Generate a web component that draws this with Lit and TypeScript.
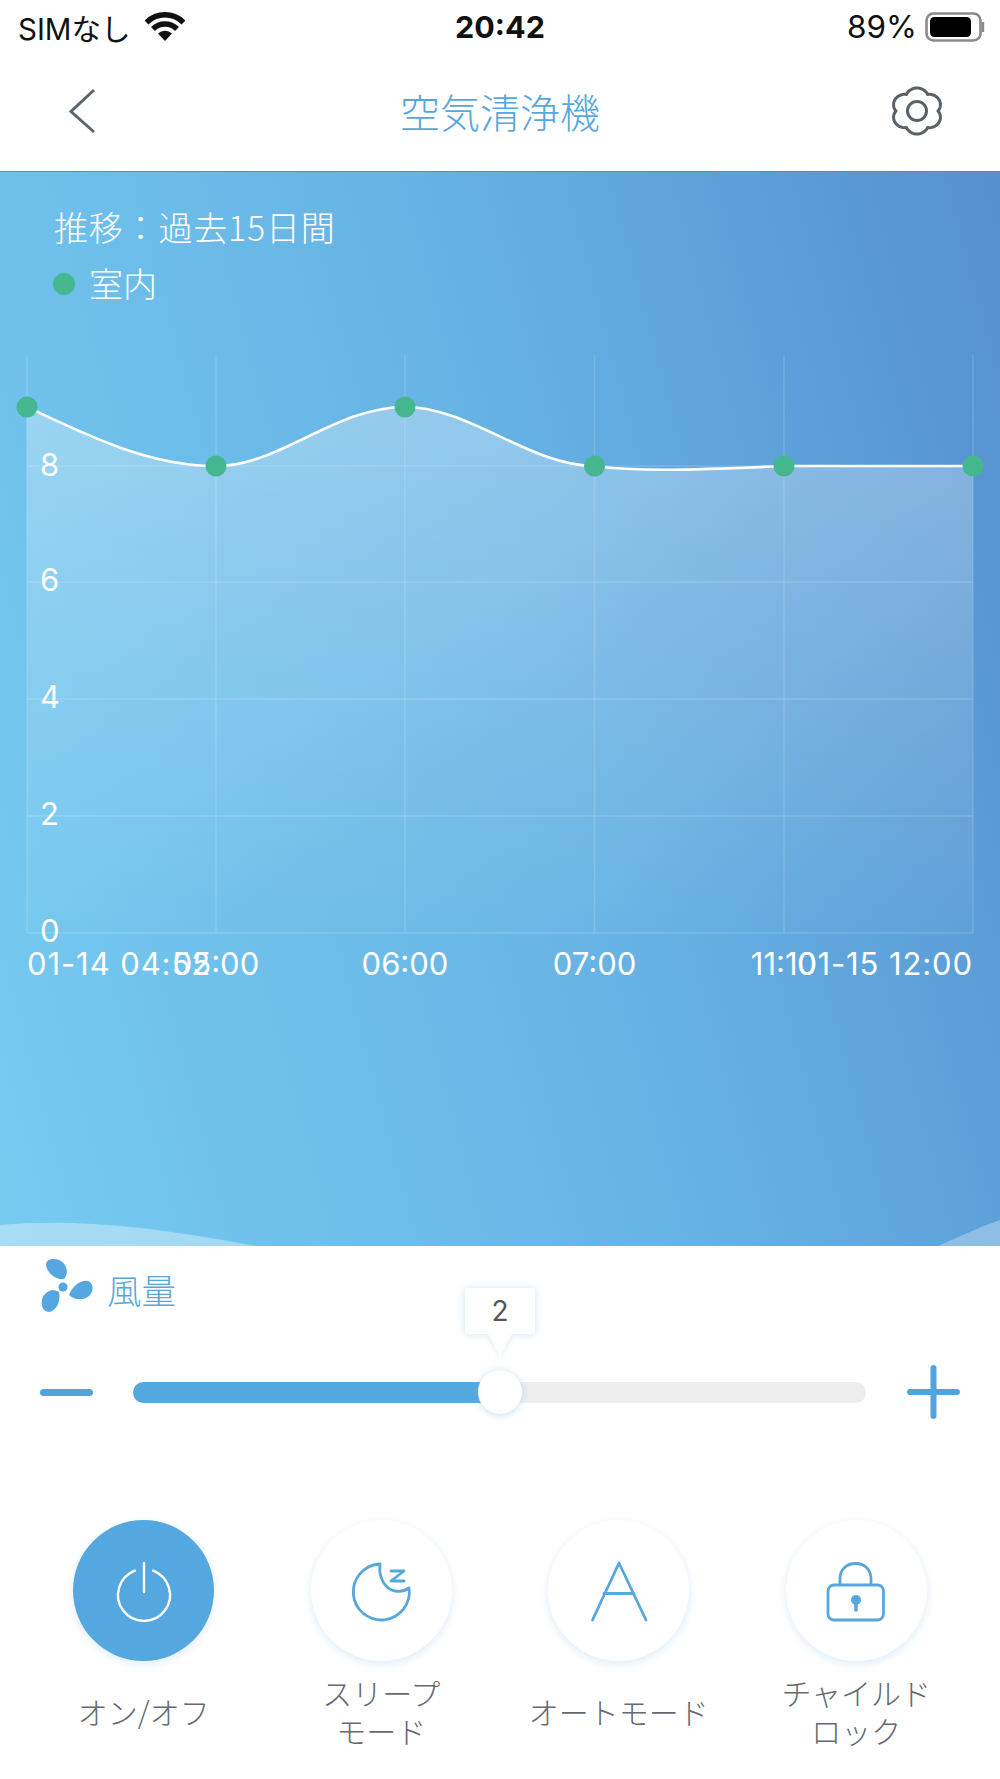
import { LitElement, html, css, svg } from "lit";
import { customElement } from "lit/decorators.js";

const gearPath = (() => {
  const pts: string[] = [];
  for (let a = 0; a < 360; a += 3) {
    const t = (a * Math.PI) / 180;
    const r = 19 + 4 * Math.pow(Math.abs(Math.cos(3 * t)), 0.8);
    pts.push(`${(25 + 1.1 * r * Math.sin(t)).toFixed(2)} ${(25 - r * Math.cos(t)).toFixed(2)}`);
  }
  return "M" + pts.join("L") + "Z";
})();

const PX = [27, 216, 405, 594.5, 784, 973];
const GY = [466, 582, 699, 816, 933];
const POINTS: [number, number][] = [
  [27, 407], [216, 466], [405, 407], [594.5, 466], [784, 466], [973, 466],
];
const CURVE =
  "M27 407C90 437 150 466 216 466C280 466 335 407 405 407C470 407 530 466 594.5 466C640 472 690 470 784 466L973 466";

const ACTIONS = [
  { label: ["オン/オフ"], on: true, icon: svg`<path d="M135 1568.6A26 26 0 1 0 153 1568.6M144 1561V1590" fill="none" stroke="#fff" stroke-width="2.4" stroke-linecap="round"/>`, vb: "114 1556 60 66" },
  { label: ["スリープ", "モード"], on: false, icon: svg`<path d="M381 1562A28 28 0 1 0 410 1586C403 1591 393 1590 388 1585C382 1579 380 1570 381 1562ZM392 1569H405L392 1579H405" fill="none" stroke="#57a7dd" stroke-width="2.8" stroke-linejoin="round" stroke-linecap="round"/>`, vb: "349 1556 66 66" },
  { label: ["オートモード"], on: false, icon: svg`<path d="M592.5 1618L619 1561L646 1618M604 1591.5H634" fill="none" stroke="#57a7dd" stroke-width="2.8" stroke-linejoin="round" stroke-linecap="round"/>`, vb: "586 1556 66 66" },
  { label: ["チャイルド", "ロック"], on: false, icon: svg`<rect x="829" y="1583" width="55.5" height="35" rx="6" fill="none" stroke="#57a7dd" stroke-width="2.8"/><path d="M841 1583V1577C841 1567 848 1561.5 856.5 1561.5C865 1561.5 872 1567 872 1577V1583" fill="none" stroke="#57a7dd" stroke-width="2.8"/><circle cx="857" cy="1598" r="5" fill="#57a7dd"/><path d="M857 1598V1608" stroke="#57a7dd" stroke-width="3.6" stroke-linecap="round"/>`, vb: "824 1556 66 66" },
];

@customElement("app-root")
export class AppRoot extends LitElement {
  static styles = css`
    :host {
      display: block;
      width: 1000px;
      height: 1779px;
      background: #fff;
      overflow: hidden;
      font-family: "Noto Sans CJK JP", "Noto Sans", sans-serif;
    }
    .status {
      height: 53px;
      display: grid;
      grid-template-columns: 1fr auto 1fr;
      align-items: center;
      color: #111;
      font-family: Inter, "Noto Sans CJK JP", sans-serif;
      font-size: 29.5px;
    }
    .status-left { display: flex; align-items: center; gap: 14px; padding-left: 18px; }
    .status-right { display: flex; align-items: center; justify-content: flex-end; gap: 7px; padding-right: 15px; }
    .pct { font-size: 31.5px; }
    .time { font-weight: 700; font-size: 30.5px; }
    .nav {
      height: 116px;
      margin-bottom: 2px;
      display: grid;
      grid-template-columns: 1fr auto 1fr;
      align-items: center;
    }
    .back { margin-left: 67px; display: block; }
    .gear { margin-left: auto; margin-right: 58px; display: block; }
    .title { color: #57a7dd; font-size: 40px; font-weight: 300; line-height: 1; margin-top: -1px; }
    .hero {
      position: relative;
      height: 1075px;
      overflow: hidden;
      border-top: 1px solid #4f8ec8;
      box-sizing: border-box;
      background: linear-gradient(75deg, #76cbf1 0%, #66b2e4 55%, #5590cf 100%);
      color: #fff;
    }
    .range { padding: 27px 0 0 54px; font-size: 34px; line-height: 56px; font-weight: 300; letter-spacing: 0.8px; }
    .legend { display: flex; align-items: center; gap: 14px; padding-left: 53px; font-size: 34px; line-height: 56px; font-weight: 300; }
    .dot { width: 22px; height: 22px; border-radius: 50%; background: #44b78e; margin-top: 2px; }
    .chart { display: block; width: 1000px; height: 690px; margin-top: 2px; font-family: Inter, sans-serif; }
    .chart text { fill: #fff; font-size: 31px; }
    .chart text.long { letter-spacing: 0.9px; }
    .wave { position: absolute; left: 0; bottom: 0; display: block; }
    .fan-row { display: flex; align-items: center; gap: 13px; padding: 12px 0 0 40px; height: 54px; color: #57a7dd; font-size: 34.5px; font-weight: 300; }
    .fan-row span { margin-top: 8px; }
    .slider { display: flex; align-items: center; gap: 40px; padding: 0 40px; margin-top: 53px; height: 54px; }
    .minus { width: 53px; height: 7px; border-radius: 4px; background: #4fa4de; flex: none; }
    .track { position: relative; flex: 1; height: 21px; border-radius: 11px; background: #eeeeee; }
    .fill { width: 367px; height: 100%; border-radius: 11px 0 0 11px; background: #55a7df; }
    .thumb {
      position: absolute; left: 345px; top: -12px; width: 44px; height: 44px; border-radius: 50%;
      background: #fff; box-shadow: 0 1px 7px rgba(120, 180, 230, 0.45);
    }
    .tip {
      position: absolute; left: 332px; top: -94px; width: 70px; height: 46px;
      display: flex; align-items: center; justify-content: center;
      background: #fff; border-radius: 3px; color: #555;
      font-family: Inter, sans-serif; font-size: 28px;
      box-shadow: 0 0 8px rgba(120, 180, 230, 0.35);
    }
    .tip::after {
      content: ""; position: absolute; left: 23px; top: 46px; width: 0; height: 0;
      border-left: 12px solid transparent; border-right: 12px solid transparent; border-top: 23px solid #fff;
      filter: drop-shadow(0 2px 2px rgba(120, 180, 230, 0.2));
    }
    .plus { flex: none; display: block; margin-left: 1px; }
    .actions { display: grid; grid-template-columns: repeat(4, 237.5px); padding: 0 25px; margin-top: 101px; }
    .action { display: flex; flex-direction: column; align-items: center; }
    .circle {
      width: 141px; height: 141px; border-radius: 50%; background: #fff;
      display: flex; align-items: center; justify-content: center;
      box-shadow: 0 3px 9px rgba(120, 180, 235, 0.24);
    }
    .circle.on { background: #55a7df; }
    .circle svg { display: block; }
    .label {
      margin-top: 11px; height: 78px; display: flex; flex-direction: column; justify-content: center; align-items: center;
      color: #666a70; font-size: 30px; line-height: 38px; font-weight: 300;
    }
  `;

  render() {
    return html`
      <div class="status">
        <div class="status-left">
          <span>SIMなし</span>
          <svg width="40" height="30" viewBox="145.5 12 40 30">
            <path d="M165.5 41L158.5 33.5A10 10 0 0 1 172.5 33.5Z" fill="#111"/>
            <path d="M153.5 29A17 17 0 0 1 177.5 29M147 22.6A26 26 0 0 1 184 22.6" fill="none" stroke="#111" stroke-width="5.5"/>
          </svg>
        </div>
        <div class="time">20:42</div>
        <div class="status-right">
          <span class="pct">89%</span>
          <svg width="61" height="32" viewBox="922 10 61 32">
            <rect x="924.5" y="12.5" width="54" height="27" rx="7" fill="none" stroke="#8a8a8a" stroke-width="2.6"/>
            <rect x="928" y="16" width="41" height="20" rx="4.5" fill="#000"/>
            <path d="M981 21V31" stroke="#8a8a8a" stroke-width="2.4"/>
          </svg>
        </div>
      </div>
      <div class="nav">
        <svg class="back" width="30" height="46" viewBox="0 0 30 46"><path d="M27 2L4 23.5L27 44" fill="none" stroke="#5b6570" stroke-width="3" stroke-linejoin="miter"/></svg>
        <div class="title">空気清浄機</div>
        <svg class="gear" width="50" height="50" viewBox="0 0 50 50">
          <path d="${gearPath}" fill="none" stroke="#5a6068" stroke-width="3" stroke-linejoin="round"/>
          <circle cx="25" cy="25" r="9.5" fill="none" stroke="#5a6068" stroke-width="3"/>
        </svg>
      </div>
      <section class="hero">
        <div class="range">推移：過去15日間</div>
        <div class="legend"><span class="dot"></span>室内</div>
        <svg class="chart" viewBox="0 313 1000 690">
          <defs>
            <linearGradient id="area" x1="0" y1="0" x2="0" y2="1">
              <stop offset="0" stop-color="#fff" stop-opacity="0.3"/>
              <stop offset="1" stop-color="#fff" stop-opacity="0.02"/>
            </linearGradient>
          </defs>
          <path d="${CURVE}L973 933L27 933Z" fill="url(#area)"/>
          ${GY.map((y) => svg`<path d="M27 ${y}H973" stroke="#fff" stroke-opacity="0.16" stroke-width="1.5"/>`)}
          ${PX.map((x) => svg`<path d="M${x} 355V933" stroke="#fff" stroke-opacity="0.14" stroke-width="1.5"/>`)}
          <path d="${CURVE}" fill="none" stroke="#fff" stroke-width="2.6"/>
          ${POINTS.map(([x, y]) => svg`<circle cx="${x}" cy="${y}" r="10.5" fill="#44b78e"/>`)}
          <text x="40" y="476">8</text>
          <text x="40" y="591">6</text>
          <text x="40" y="708">4</text>
          <text x="40" y="825">2</text>
          <text x="40" y="942">0</text>
          <text class="long" x="27" y="975">01-14 04:52</text>
          <text x="216" y="975" text-anchor="middle">05:00</text>
          <text x="405" y="975" text-anchor="middle">06:00</text>
          <text x="594.5" y="975" text-anchor="middle">07:00</text>
          <text x="784" y="975" text-anchor="middle">11:10</text>
          <text class="long" x="973" y="975" text-anchor="end">01-15 12:00</text>
        </svg>
        <svg class="wave" width="1000" height="26" viewBox="0 1220 1000 26">
          <path d="M0 1225C60 1220 130 1222 255 1246H0Z" fill="#fff" fill-opacity="0.36"/>
          <path d="M938 1246C960 1236 980 1227 1000 1220V1246Z" fill="#fff" fill-opacity="0.3"/>
        </svg>
      </section>
      <div class="fan-row">
        <svg width="54" height="56" viewBox="39 1257 54 56">
          <g fill="#55a7df">
            <path d="M63 1279C54 1280 45 1272 45 1264C46 1258 55 1258 60 1261C66 1265 68 1273 63 1279Z"/>
            <path d="M68 1295C72 1285 80 1280 87 1281C93 1283 93 1292 88 1296C82 1301 73 1300 68 1295Z"/>
            <path d="M58 1292C60 1300 56 1311 48 1312C41 1312 39 1303 42 1297C45 1291 52 1288 58 1292Z"/>
            <circle cx="62" cy="1287" r="4.5"/>
          </g>
        </svg>
        <span>風量</span>
      </div>
      <div class="slider">
        <div class="minus"></div>
        <div class="track">
          <div class="fill"></div>
          <div class="tip">2</div>
          <div class="thumb"></div>
        </div>
        <svg class="plus" width="53" height="54" viewBox="0 0 53 54">
          <path d="M3 27H50M26.5 3V51" stroke="#4fa4de" stroke-width="6" stroke-linecap="round"/>
        </svg>
      </div>
      <div class="actions">
        ${ACTIONS.map((a) => html`
          <div class="action">
            <div class="circle ${a.on ? "on" : ""}">
              <svg width="${a.on ? 60 : 66}" height="66" viewBox="${a.vb}">${a.icon}</svg>
            </div>
            <div class="label">${a.label.map((l) => html`<span>${l}</span>`)}</div>
          </div>
        `)}
      </div>
    `;
  }
}
